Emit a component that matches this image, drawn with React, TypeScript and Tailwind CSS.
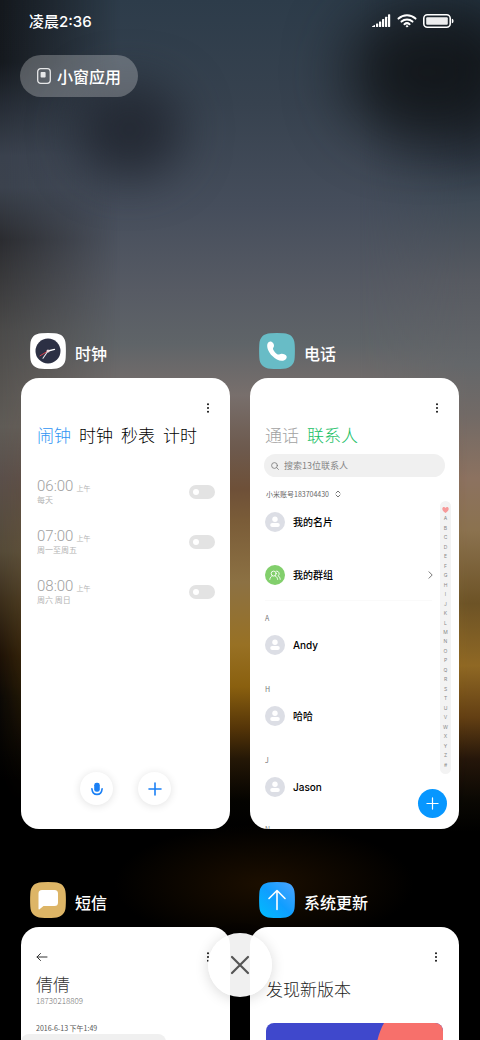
import type { ReactNode } from "react";

const LETTERS = "ABCDEFGHIJKLMNOPQRSTUVWXYZ#".split("");

const ALARMS = [
    { time: "06:00", period: "上午", repeat: "每天" },
    { time: "07:00", period: "上午", repeat: "周一至周五" },
    { time: "08:00", period: "上午", repeat: "周六 周日" },
];

const CONTACTS = [
    { letter: "A", name: "Andy" },
    { letter: "H", name: "哈哈" },
    { letter: "J", name: "Jason" },
];

// --- ICONS ---

const SignalIcon = () => (
    <svg width="19" height="14" viewBox="0 0 19 14" fill="#fff" aria-hidden="true">
        <path d="M0.3 13c-.4 0-.4-.6 0-.8L3 10.8V13z" />
        <rect x="4" y="9.5" width="2.2" height="3.5" rx="0.4" />
        <rect x="7" y="7.5" width="2.2" height="5.5" rx="0.4" />
        <rect x="10" y="5" width="2.2" height="8" rx="0.4" />
        <rect x="13" y="2.8" width="2.2" height="10.2" rx="0.4" />
        <rect x="16" y="0.3" width="2.2" height="12.7" rx="0.4" />
    </svg>
);

const WifiIcon = () => (
    <svg width="20" height="14" viewBox="0 0 20 14" fill="none" stroke="#fff" strokeWidth="2" strokeLinecap="round" aria-hidden="true">
        <path d="M1.5 4.6a12.5 12.5 0 0 1 17 0" />
        <path d="M4.5 7.6a8 8 0 0 1 11 0" />
        <path d="M7.4 10.2a4 4 0 0 1 5.2 0" />
        <circle cx="10" cy="12.3" r="0.7" fill="#fff" strokeWidth="1" />
    </svg>
);

const BatteryIcon = () => (
    <svg width="31" height="14" viewBox="0 0 31 14" fill="none" aria-hidden="true">
        <rect x="0.8" y="0.8" width="26.4" height="12.4" rx="3.5" stroke="#fff" strokeWidth="1.6" />
        <rect x="3.2" y="3.2" width="21.6" height="7.6" rx="1" fill="#fff" fillOpacity="0.92" />
        <path d="M28.8 4.8c1.4.2 1.7 1.1 1.7 2.2s-.3 2-1.7 2.2z" fill="#fff" />
    </svg>
);

const MoreIcon = () => (
    <svg width="4" height="10" viewBox="0 0 4 10" fill="#111" aria-hidden="true">
        <circle cx="2" cy="1.2" r="1" />
        <circle cx="2" cy="5" r="1" />
        <circle cx="2" cy="8.8" r="1" />
    </svg>
);

const PlusIcon = ({ size, width }: { size: number; width: number }) => (
    <svg width={size} height={size} viewBox="0 0 14 14" fill="none" stroke="currentColor" strokeWidth={width} strokeLinecap="round" aria-hidden="true">
        <path d="M7 1v12M1 7h12" />
    </svg>
);

const LOGO_SHAPE = "M11.5.3Q18-.1 24.5.3C31.5.6 35.4 4.500 35.700 11.500Q36.100 18 35.700 24.500C35.400 31.500 31.500 35.400 24.500 35.700Q18 36.100 11.500 35.700C4.500 35.400.6 31.500.3 24.500Q-.1 18 .3 11.500C.6 4.500 4.500.6 11.500.3z";

const ClockLogo = () => (
    <svg width="36" height="36" viewBox="0 0 36 36" fill="none" aria-hidden="true">
        <path d={LOGO_SHAPE} fill="#fff" />
        <circle cx="18" cy="18" r="12.5" fill="#2c3044" />
        <g strokeLinecap="round">
            <path d="M18 18 10 22.8" stroke="#d8404c" strokeWidth="1" />
            <path d="M18 18l-5 7.2" stroke="#e8e8ee" strokeWidth="1.1" />
            <path d="M18 18l6.5-1.6" stroke="#fff" strokeWidth="1.3" />
        </g>
        <circle cx="18" cy="18" r="1.5" fill="#f3d9dc" />
    </svg>
);

const PhoneLogo = () => (
    <svg width="36" height="36" viewBox="0 0 36 36" aria-hidden="true">
        <path d={LOGO_SHAPE} fill="#68bcc6" />
        <path
            d="M8.6 10.4c.8-1.7 2.5-2.5 3.9-1.7 1.6.9 2.7 2.7 2.5 4.2-.1 1.2-1.1 1.7-1 2.9.2 1.8 2.9 4.8 4.7 5.6 1.3.6 2.2-.8 4-.7 2.2.1 4.4 1 4.9 2.6.5 1.7-.7 3.5-2.7 4.2-3.5 1.2-8-.8-11.5-4.4-3.9-3.9-6.2-9.4-4.8-12.7z"
            fill="#fff"
        />
    </svg>
);

const MessageLogo = () => (
    <svg width="36" height="36" viewBox="0 0 36 36" aria-hidden="true">
        <path d={LOGO_SHAPE} fill="#ddb566" />
        <path d="M12 8h12.5a3.5 3.5 0 0 1 3.5 3.5v9a3.5 3.5 0 0 1-3.5 3.5H13.5l-4 3.2c-.6.5-1 .2-1-.5V11.5A3.5 3.5 0 0 1 12 8z" fill="#fff" />
    </svg>
);

const UpdateLogo = () => (
    <svg width="36" height="36" viewBox="0 0 36 36" fill="none" aria-hidden="true">
        <defs>
            <linearGradient id="update" x1="0" y1="1" x2="1" y2="0">
                <stop offset="0" stopColor="#00bdfd" />
                <stop offset="0.5" stopColor="#109eff" />
                <stop offset="1" stopColor="#4fa5ff" />
            </linearGradient>
        </defs>
        <path d={LOGO_SHAPE} fill="url(#update)" />
        <path d="M18 27.5V8.8M10 16.5l8-8 8 8" stroke="#fff" strokeWidth="1.6" strokeLinecap="round" strokeLinejoin="round" />
    </svg>
);

const Avatar = () => (
    <svg width="20" height="20" viewBox="0 0 20 20" className="shrink-0" aria-hidden="true">
        <circle cx="10" cy="10" r="10" fill="#dcdee5" />
        <circle cx="10" cy="7.3" r="2.7" fill="#fff" />
        <rect x="5.2" y="10.9" width="9.6" height="4" rx="2" fill="#fff" />
    </svg>
);

const GroupAvatar = () => (
    <svg width="20" height="20" viewBox="0 0 20 20" fill="none" className="shrink-0" aria-hidden="true">
        <circle cx="10" cy="10" r="10" fill="#82cf6c" />
        <g stroke="#fff" strokeWidth="0.9" strokeLinecap="round">
            <circle cx="8.7" cy="8.6" r="2.5" />
            <path d="M4.8 14.4c.2-1.9 1.2-3.1 2.5-3.6M10.2 10.9c1.3.5 2.2 1.7 2.4 3.5" />
            <path d="M11.6 6.1a2.5 2.5 0 0 1 1.4 4.6c1.3.6 2 1.8 2.2 3.6" />
        </g>
    </svg>
);

// --- TASK CARDS ---

function Task({ name, logo, children }: { name: string; logo: ReactNode; children: ReactNode }) {
    return (
        <section className="min-w-0">
            <header className="mb-[9px] flex items-center gap-[9px] pl-[9px]">
                {logo}
                <h2 className="pt-1 text-base leading-6 font-medium text-white">{name}</h2>
            </header>
            <div className="relative h-[451px] overflow-hidden rounded-[18px] bg-white">{children}</div>
        </section>
    );
}

function MoreButton() {
    return (
        <button aria-label="更多" className="ml-auto flex h-3 w-3 items-center justify-center">
            <MoreIcon />
        </button>
    );
}

function ClockCard() {
    return (
        <div className="flex h-full flex-col px-[15px] pt-6">
            <div className="flex pr-[1px]">
                <MoreButton />
            </div>
            <nav className="mt-[9px] flex gap-2 pl-[1px] text-[17px] leading-6 font-light whitespace-nowrap text-black">
                <a href="#alarm" className="text-[#2f94f3]">闹钟</a>
                <a href="#clock">时钟</a>
                <a href="#stopwatch">秒表</a>
                <a href="#timer">计时</a>
            </nav>
            <ul className="mt-6">
                {ALARMS.map((alarm) => (
                    <li key={alarm.time} className="flex h-[50px] items-center justify-between pb-2">
                        <label htmlFor={alarm.time} className="pl-[1px] text-[#b4b4b4]">
                            <span className="flex items-baseline gap-[3px]">
                                <span className="font-['Roboto',sans-serif] text-[15px] leading-4 font-light text-[#a0a0a0]">{alarm.time}</span>
                                <span className="text-[7px] leading-[10px]">{alarm.period}</span>
                            </span>
                            <span className="block text-[8px] leading-3">{alarm.repeat}</span>
                        </label>
                        <span className="relative flex">
                            <input id={alarm.time} type="checkbox" className="peer h-[14px] w-[26px] appearance-none rounded-full bg-[#e3e3e3]" />
                            <span className="pointer-events-none absolute top-1 left-1 h-[6px] w-[6px] rounded-full bg-white peer-checked:left-4" />
                        </span>
                    </li>
                ))}
            </ul>
            <div className="mt-auto flex justify-center gap-[25px] pb-6 text-[#1b80f5]">
                <button aria-label="语音" className="flex h-[33px] w-[33px] items-center justify-center rounded-full bg-white shadow-[0_1px_8px_rgba(0,0,0,0.12)]">
                    <svg width="12" height="14" viewBox="0 0 12 14" fill="none" aria-hidden="true">
                        <rect x="3.2" y="0.8" width="5.6" height="9" rx="2.4" fill="currentColor" />
                        <path d="M0.9 6.8c.4 3.7 2.4 5.6 5.1 5.6s4.7-1.9 5.1-5.6" stroke="currentColor" strokeWidth="1.6" strokeLinecap="round" />
                    </svg>
                </button>
                <button aria-label="添加闹钟" className="flex h-[33px] w-[33px] items-center justify-center rounded-full bg-white shadow-[0_1px_8px_rgba(0,0,0,0.12)]">
                    <PlusIcon size={14} width={1.6} />
                </button>
            </div>
        </div>
    );
}

function PhoneCard() {
    return (
        <div className="px-[15px] pt-6">
            <div className="flex pr-[1px]">
                <MoreButton />
            </div>
            <nav className="mt-[9px] flex gap-2 text-[17px] leading-6 font-light whitespace-nowrap">
                <a href="#calls" className="text-[#a2a2a2]">通话</a>
                <a href="#contacts" className="text-[#16be63]">联系人</a>
            </nav>
            <label className="-mx-[1px] mt-[7px] flex h-[23px] items-center gap-[5px] rounded-full bg-[#f0f0f0] px-[7px]">
                <svg width="8" height="8" viewBox="0 0 8 8" fill="none" stroke="#777" strokeWidth="0.8" strokeLinecap="round" className="shrink-0" aria-hidden="true">
                    <circle cx="3.5" cy="3.5" r="2.9" />
                    <path d="M5.7 5.7 7.5 7.5" />
                </svg>
                <input type="text" aria-label="搜索联系人" placeholder="搜索13位联系人" className="min-w-0 flex-1 bg-transparent text-[9px] leading-4 outline-none placeholder:text-[#858585]" />
            </label>
            <button className="mt-3 flex items-center gap-[6px] pl-[1px] text-[7px] leading-[10px] text-[#666]">
                小米账号183704430
                <svg width="6" height="8" viewBox="0 0 6 8" fill="none" stroke="#666" strokeWidth="0.9" strokeLinecap="round" strokeLinejoin="round" aria-hidden="true">
                    <path d="M1 3l2-2 2 2M1 5l2 2 2-2" />
                </svg>
            </button>
            <div className="mt-[13px] flex items-center gap-2">
                <Avatar />
                <span className="text-[10px] leading-5 font-medium text-black">我的名片</span>
            </div>
            <a href="#groups" className="mt-[33px] flex items-center gap-2 pr-[11px]">
                <GroupAvatar />
                <span className="text-[10px] leading-5 font-medium text-black">我的群组</span>
                <svg width="5" height="8" viewBox="0 0 5 8" fill="none" stroke="#777" strokeLinecap="round" strokeLinejoin="round" className="ml-auto" aria-hidden="true">
                    <path d="M1 .8 4.2 4 1 7.2" />
                </svg>
            </a>
            <ul className="mt-[15px] mr-3 border-t border-[#fafafa]">
                {CONTACTS.map((contact) => (
                    <li key={contact.letter} className="h-[71px] pt-3">
                        <div className="text-[7px] leading-[10px] text-[#777]">{contact.letter}</div>
                        <div className="mt-3 flex items-center gap-2">
                            <Avatar />
                            <span className="font-['Inter','Noto_Sans_CJK_SC',sans-serif] text-[10px] leading-5 font-medium text-black">{contact.name}</span>
                        </div>
                    </li>
                ))}
                <li className="pt-[10px] text-[7px] leading-[10px] text-[#777]">N</li>
            </ul>

            {/* letter index over the list */}
            <nav aria-label="字母索引" className="absolute top-[123px] right-2 flex w-[11px] flex-col items-center rounded-full bg-[#f3f3f3] py-1">
                <svg width="7" height="9" viewBox="0 0 7 9" aria-hidden="true">
                    <path d="M3.5 8C1.5 6.5.3 5.3.3 3.7.3 1.8 2.5 1.3 3.5 2.9 4.5 1.3 6.7 1.8 6.7 3.7 6.7 5.3 5.5 6.5 3.5 8z" fill="#f79a9a" />
                </svg>
                <div className="grid h-[256px] auto-rows-fr">
                    {LETTERS.map((letter) => (
                        <a key={letter} href="#contacts" className="flex items-center justify-center font-['Inter',sans-serif] text-[5px] leading-[5px] text-[#888]">{letter}</a>
                    ))}
                </div>
            </nav>
            <button aria-label="新建联系人" className="absolute right-3 bottom-[11px] flex h-[29px] w-[29px] items-center justify-center rounded-full bg-[#0797ff] text-white">
                <PlusIcon size={13} width={1.3} />
            </button>
        </div>
    );
}

function MessageCard() {
    return (
        <div className="px-[15px] pt-6">
            <div className="flex items-center pr-[1px]">
                <button aria-label="返回" className="flex h-3 w-3 items-center justify-center">
                    <svg width="12" height="10" viewBox="0 0 12 10" fill="none" stroke="#333" strokeLinecap="round" strokeLinejoin="round" aria-hidden="true">
                        <path d="M11 5H1M4.5 1.5 1 5l3.5 3.5" />
                    </svg>
                </button>
                <MoreButton />
            </div>
            <h3 className="mt-[9px] text-[17px] leading-6 font-light text-[#333]">倩倩</h3>
            <p className="text-[8px] leading-[10px] font-light text-[#777]">18730218809</p>
            <time className="mt-4 block text-[7px] leading-3 text-[#555]">2016-6-13 下午1:49</time>
            <div className="-ml-[15px] h-16 w-[145px] rounded-[8px] bg-[#f0f0f0]" />
        </div>
    );
}

function UpdateCard() {
    return (
        <div className="px-4 pt-6">
            <div className="flex pr-[1px]">
                <MoreButton />
            </div>
            <h3 className="mt-[14px] text-[17px] leading-6 font-light text-[#222]">发现新版本</h3>
            <div className="mt-[22px] h-[200px] overflow-hidden rounded-[8px] bg-[#3f48cc]">
                <svg width="100%" height="200" viewBox="0 0 177 200" preserveAspectRatio="none" aria-hidden="true">
                    <path d="M118 0C111 12 108 30 108 50v150h69V0z" fill="#f7706b" />
                </svg>
            </div>
        </div>
    );
}

// --- WALLPAPER ---

function Wallpaper() {
    return (
        <div className="absolute inset-0 overflow-hidden bg-[linear-gradient(180deg,#2d3c4a_0%,#37424f_10%,#464e5c_20%,#575b64_28%,#5f6468_33%,#786f6c_38%,#6d5a4e_43%,#6e5038_47%,#7a5c38_50%,#8c7143_56%,#987124_62%,#8a600f_66%,#553508_70%,#241706_73%,#040300_77%,#000_80%)]">
            {/* edges are lit differently from the middle */}
            <div className="absolute inset-y-0 left-0 w-1/4 bg-[linear-gradient(180deg,#14181d_0%,#15191e_6%,#252b34_10%,#3a414d_15%,#3b424d_18%,#2b2c30_23%,#4b4a49_32%,#5f5b56_41%,#5a4f4a_46%,#544a38_53%,#3a2d1a_58%,#1e1206_63%,#0c0905_67%,#000_75%)] [mask-image:linear-gradient(90deg,#000,transparent)]" />
            <div className="absolute inset-y-0 right-0 w-1/4 bg-[linear-gradient(180deg,#24323e_0%,#1c242c_6%,#262e38_12%,#2d3642_15%,#3e4955_19%,#575a61_27%,#64676a_35%,#726a66_40%,#8c7260_46%,#8b724f_51%,#6d5326_58%,#8f6824_64%,#633f13_69%,#25160a_73%,#0a0803_77%,#000_80%)] [mask-image:linear-gradient(270deg,#000_10%,transparent)]" />
            {/* soft dark patches */}
            <div className="absolute top-[1%] left-[72%] h-[12%] w-[34%] rounded-full bg-[#101418]/85 blur-[30px]" />
            <div className="absolute top-[8%] left-[16%] h-[9%] w-[22%] rounded-full bg-[#1c202a]/75 blur-[24px]" />
            <div className="absolute inset-0 bg-[radial-gradient(ellipse_150px_60px_at_55%_85%,rgba(46,24,0,0.6),transparent)]" />
        </div>
    );
}

export default function App() {
    return (
        <div className="relative h-screen overflow-hidden bg-black font-['Noto_Sans_CJK_SC',sans-serif]">
            <Wallpaper />

            <div className="relative">
                {/* STATUS BAR */}
                <div className="flex h-[42px] items-center justify-between pr-[26px] pl-[29px]">
                    <span className="pt-[1px] font-['Inter','Noto_Sans_CJK_SC',sans-serif] text-[15px] leading-5 font-medium text-white">凌晨2:36</span>
                    <div className="flex items-center gap-[6px]">
                        <SignalIcon />
                        <WifiIcon />
                        <BatteryIcon />
                    </div>
                </div>

                {/* FLOATING WINDOW SHORTCUT */}
                <div className="px-5 pt-[13px]">
                    <button className="flex h-[42px] items-center gap-[6px] rounded-full bg-white/25 px-[17px] text-base leading-6 font-medium text-white">
                        <svg width="14" height="16" viewBox="0 0 14 16" fill="none" aria-hidden="true">
                            <rect x="0.7" y="0.7" width="12.6" height="14.6" rx="3" stroke="#fff" strokeOpacity="0.85" strokeWidth="1.3" />
                            <rect x="3.6" y="4" width="5" height="5.5" rx="0.8" fill="#fff" fillOpacity="0.85" />
                        </svg>
                        小窗应用
                    </button>
                </div>

                {/* TASKS */}
                <main className="mt-[236px] grid grid-cols-2 gap-x-5 gap-y-[53px] px-[21px]">
                    <Task name="时钟" logo={<ClockLogo />}><ClockCard /></Task>
                    <Task name="电话" logo={<PhoneLogo />}><PhoneCard /></Task>
                    <Task name="短信" logo={<MessageLogo />}><MessageCard /></Task>
                    <Task name="系统更新" logo={<UpdateLogo />}><UpdateCard /></Task>
                </main>
            </div>

            {/* CLOSE ALL */}
            <div className="pointer-events-none absolute inset-x-0 bottom-[43px] flex justify-center">
                <button aria-label="全部清除" className="pointer-events-auto flex h-16 w-16 items-center justify-center rounded-full bg-white/94 shadow-[0_2px_14px_rgba(0,0,0,0.15)]">
                    <svg width="20" height="20" viewBox="0 0 20 20" fill="none" stroke="#555" strokeWidth="2.2" strokeLinecap="round" aria-hidden="true">
                        <path d="M2 2l16 16M18 2 2 18" />
                    </svg>
                </button>
            </div>
        </div>
    );
}
